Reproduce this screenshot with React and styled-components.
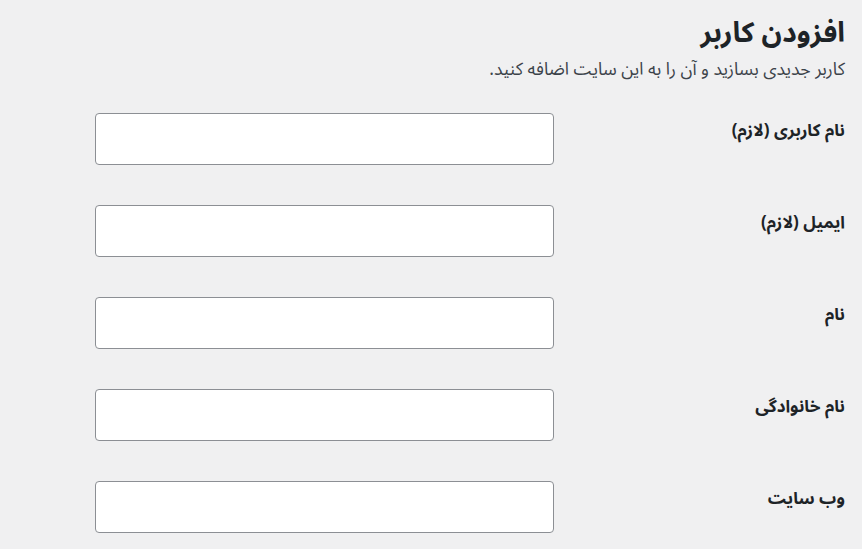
import React from "react";
import styled, { createGlobalStyle } from "styled-components";

const Global = createGlobalStyle`
  html, body { margin: 0; padding: 0; background: #f0f0f1; }
  body { font-family: "Noto Sans Arabic", "DejaVu Sans", sans-serif; color: #1d2327; }
`;

const Page = styled.div`
  direction: rtl;
  width: 862px;
  height: 549px;
  overflow: hidden;
  box-sizing: border-box;
  padding: 13px 17px 0 0;
`;

const Title = styled.h1`
  margin: 0 0 1px;
  font-size: 28px;
  line-height: 42px;
  font-weight: 700;
  color: #1d2327;
`;

const Desc = styled.p`
  margin: 0 0 29px;
  font-size: 17.5px;
  line-height: 28px;
  color: #3c434a;
`;

const Form = styled.div`
  display: flex;
  flex-direction: column;
  gap: 40px;
`;

const Row = styled.div`
  display: grid;
  grid-template-columns: 291px 459px;
  align-items: start;
`;

const Label = styled.label`
  font-size: 17px;
  font-weight: 700;
  line-height: 28px;
  padding-top: 4px;
  color: #1d2327;
`;

const Input = styled.input`
  box-sizing: border-box;
  width: 459px;
  height: 52px;
  margin: 0;
  background: #fff;
  border: 1px solid #8c8f94;
  border-radius: 4px;
  padding: 0 10px;
  font: inherit;
  outline: none;
`;

const fields = [
  "نام کاربری (لازم)",
  "ایمیل (لازم)",
  "نام",
  "نام خانوادگی",
  "وب سایت",
];

export default function App() {
  return (
    <>
      <Global />
      <Page>
        <Title>افزودن کاربر</Title>
        <Desc>کاربر جدیدی بسازید و آن را به این سایت اضافه کنید.</Desc>
        <Form>
          {fields.map((f) => (
            <Row key={f}>
              <Label>{f}</Label>
              <Input type="text" />
            </Row>
          ))}
        </Form>
      </Page>
    </>
  );
}
